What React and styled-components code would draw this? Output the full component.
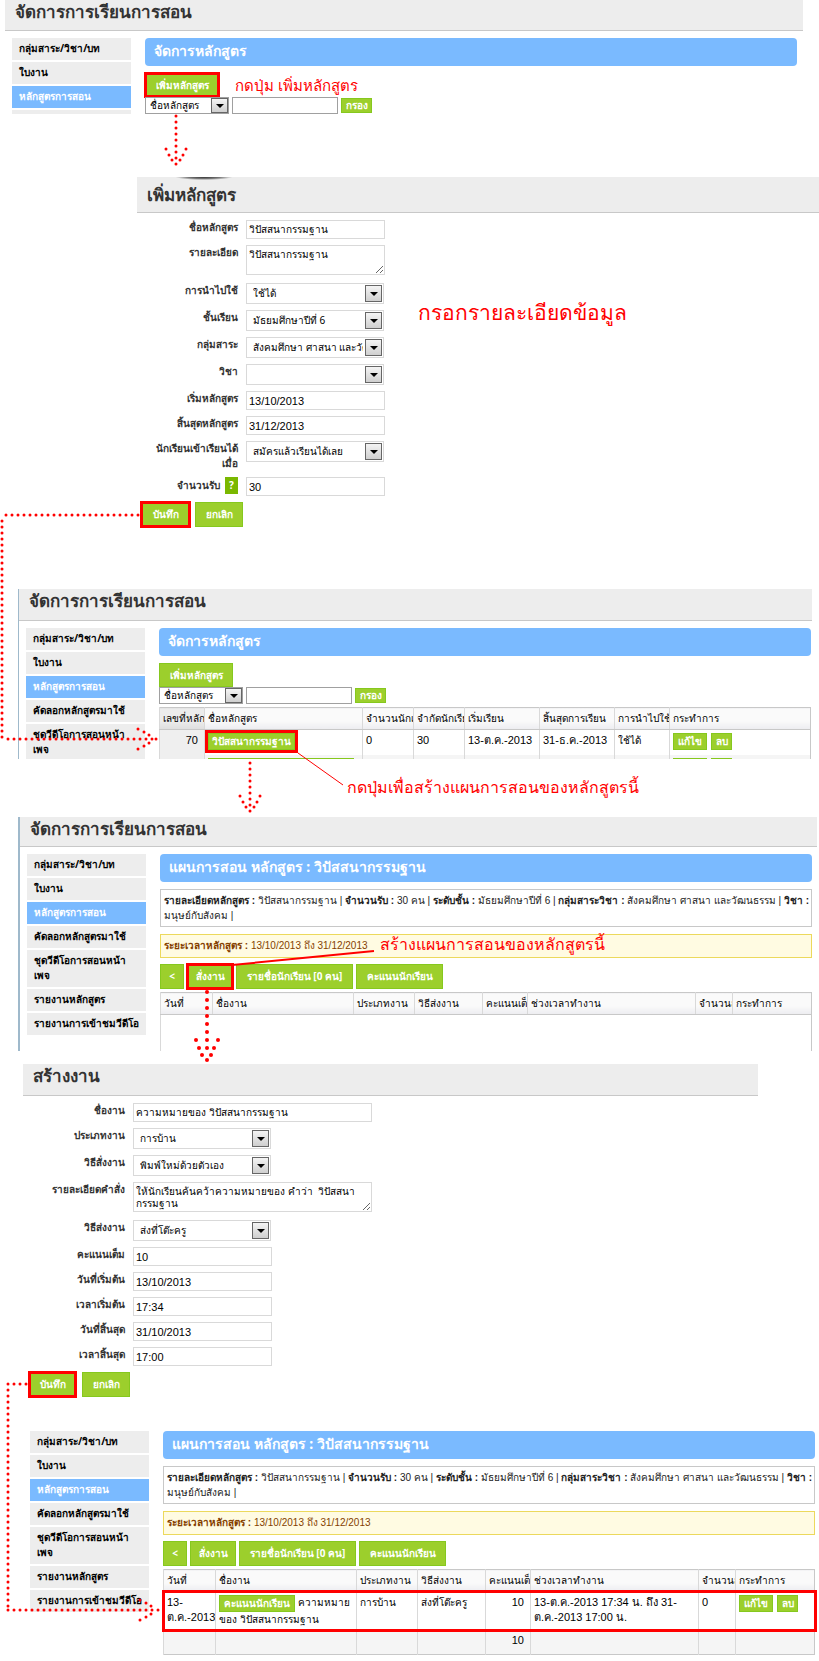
import React, { useId } from "react";
import styled, { createGlobalStyle, css } from "styled-components";

const Global = createGlobalStyle`
  * { box-sizing: border-box; }
  body { margin: 0; background: #fff; color: #000; font: 10px/15px Tahoma, "Noto Sans", "Liberation Sans", sans-serif; }
  button, input, select, textarea { font: inherit; color: inherit; margin: 0; }
`;

const Page = styled.main`
  position: relative;
  min-height: 100vh;
`;

const Panel = styled.section`
  margin: 0 ${(p) => p.$right}px ${(p) => p.$after || 0}px ${(p) => p.$left}px;
  border-left: ${(p) => p.$edge || 0}px solid #9fb9cb;
  ${(p) => p.$crop && css`height: ${p.$crop}px; overflow: hidden;`}
`;

const Heading = styled.h1`
  margin: 0;
  height: ${(p) => p.$height}px;
  padding: 0 10px;
  display: flex;
  align-items: ${(p) => p.$align || "center"};
  background: #ededed;
  border-bottom: 1px solid #c8c8c8;
  color: #333;
  font-size: 17px;
  line-height: 23px;
  font-weight: 700;
`;

const Shade = styled.span`
  position: absolute;
  top: 177px;
  left: 176px;
  width: 56px;
  height: 3px;
  background: radial-gradient(ellipse at top, #333, #777 40%, #ededed 72%);
`;

const Columns = styled.div`
  display: flex;
  gap: 14px;
  padding: 7px ${(p) => p.$right}px 0 ${(p) => p.$left}px;
`;

const Side = styled.nav`
  flex: none;
  width: 119px;
  display: flex;
  flex-direction: column;
  gap: 2px;
`;

const SideLink = styled.a`
  padding: 3px 7px 4px;
  background: ${(p) => (p.$on ? "#7abaff" : "#ededed")};
  color: ${(p) => (p.$on ? "#fff" : "#000")};
  font-weight: 700;
  text-decoration: none;
  white-space: pre;
`;

const Main = styled.div`
  flex: 1;
  min-width: 0;
`;

const Banner = styled.h2`
  margin: 0 0 7px;
  height: 28px;
  padding: 0 9px;
  border-radius: 4px;
  background: #7abaff;
  color: #fff;
  font-size: 14px;
  line-height: 26px;
  font-weight: 700;
`;

const Button = styled.button`
  height: ${(p) => p.$height || 25}px;
  padding: 0;
  border: 1px solid #86c81e;
  background: #9ccf2c;
  color: #fff;
  font-weight: 700;
  white-space: nowrap;
  vertical-align: top;
  width: ${(p) => p.$width}px;
  ${(p) => p.$marked && css`outline: 3px solid #f00; outline-offset: -2px;`}
`;

const SmallButton = styled(Button)`
  height: ${(p) => p.$height || 17}px;
  line-height: 13px;
  outline-offset: 0;
`;

const Bar = styled.div`
  display: flex;
  align-items: ${(p) => p.$align || "center"};
  gap: ${(p) => p.$gap}px;
  padding: ${(p) => p.$pad || "0"};
`;

const Note = styled.p`
  margin: 0;
  padding-top: ${(p) => p.$drop || 0}px;
  color: #f00;
  font-size: ${(p) => p.$size}px;
  line-height: 24px;
  white-space: nowrap;
`;

const OverNote = styled(Note)`
  position: absolute;
  top: 932px;
  left: 380px;
`;

const Picker = styled.span`
  display: grid;
  width: ${(p) => p.$width}px;
  height: ${(p) => p.$height}px;
  border: 1px solid ${(p) => p.$line};
  background: #fff;
  & > * { grid-area: 1 / 1; }
`;

const PickerSelect = styled.select`
  appearance: none;
  width: 100%;
  min-width: 0;
  border: 0;
  background: transparent;
  padding: 0 20px 0 ${(p) => p.$indent}px;
  text-overflow: clip;
`;

const Knob = styled.span`
  justify-self: end;
  align-self: center;
  pointer-events: none;
  display: grid;
  place-items: center;
  width: 17px;
  height: ${(p) => p.$height}px;
  margin-right: ${(p) => p.$inset}px;
  border: 1px solid #666;
  background: linear-gradient(#f4f4f4, #cfcfcf);
  &::after {
    content: "";
    border: 4px solid transparent;
    border-top-color: #000;
    border-bottom: 0;
  }
`;

const TextBox = styled.input`
  width: ${(p) => p.$width}px;
  height: ${(p) => p.$height || 19}px;
  padding: 0 2px;
  border: 1px solid ${(p) => p.$line || "#d9d9d9"};
  background: #fff;
  font-family: "Liberation Sans", sans-serif;
  font-size: ${(p) => (p.$thai ? 10 : 11)}px;
`;

const TextArea = styled.textarea`
  width: ${(p) => p.$width}px;
  height: 30px;
  margin-bottom: 2px;
  padding: 2px;
  border: 1px solid #d9d9d9;
  line-height: 12px;
  overflow: hidden;
`;

const Form = styled.form`
  display: grid;
  grid-template-columns: ${(p) => p.$label}px auto;
  column-gap: 8px;
  row-gap: 6px;
  justify-content: start;
  align-items: start;
  padding-top: 7px;
`;

const Label = styled.label`
  color: #333;
  font-weight: 700;
  text-align: right;
  white-space: pre-line;
`;

const Help = styled.button`
  width: 13px;
  height: 17px;
  margin-left: 2px;
  padding: 0;
  border: 0;
  background: #7ab800;
  color: #fff;
  font-weight: 700;
`;

const Box = styled.div`
  padding: 3px;
  margin-bottom: ${(p) => (p.$warm ? 6 : 7)}px;
  border: 1px solid ${(p) => (p.$warm ? "#ecd95c" : "#c8c8c8")};
  background: ${(p) => (p.$warm ? "#fffbe2" : "#fff")};
  color: ${(p) => (p.$warm ? "#853f00" : "#222")};
  min-height: ${(p) => (p.$warm ? 24 : 38)}px;
  font-family: "Liberation Sans", sans-serif;
  white-space: nowrap;
`;

const Table = styled.table`
  width: 100%;
  table-layout: fixed;
  border-collapse: collapse;
  border: 1px solid #c8c8c8;
  th, td {
    padding: 3px;
    border-left: 1px solid #d9d9d9;
    text-align: left;
    vertical-align: top;
    overflow: hidden;
  }
  th {
    height: 22px;
    background: linear-gradient(#fafafa 60%, #ececf0);
    border-bottom: 1px solid #c8c8c8;
    font-weight: 400;
    white-space: nowrap;
  }
  td { font-family: "Liberation Sans", sans-serif; font-size: 11px; }
  ${(p) => p.$lead && css`
    th:first-child { background: linear-gradient(#ececec 60%, #dedede); }
    td:first-child { background: #efefef; }
  `}
`;

const Col = styled.col`
  width: ${(p) => (p.$width ? p.$width + "px" : "auto")};
`;

const Row = styled.tr`
  height: ${(p) => p.$height}px;
  background: ${(p) => (p.$shade ? "#f5f5f5" : "#fff")};
  ${(p) => p.$marked && css`outline: 3px solid #f00; outline-offset: -1px;`}
  button { font: 700 10px/13px Tahoma, "Noto Sans", sans-serif; }
`;

const Num = styled.td`
  && { text-align: right; padding-right: 6px; }
`;

const DateCell = styled.td`
  && { padding-right: 0; white-space: nowrap; }
`;

const Small = styled.span`
  font-size: 10px;
`;

const Connectors = styled.svg`
  position: absolute;
  inset: 0;
  width: 100%;
  height: 100%;
  pointer-events: none;
  fill: #f00;
`;

const menu = [
  "กลุ่มสาระ/วิชา/บท",
  "ใบงาน",
  "หลักสูตรการสอน",
  "คัดลอกหลักสูตรมาใช้",
  "ชุดวีดีโอการสอนหน้า\nเพจ",
  "รายงานหลักสูตร",
  "รายงานการเข้าชมวีดีโอ",
];

function SideMenu({ count = 7 }) {
  return (
    <Side>
      {menu.slice(0, count).map((m, i) => (
        <SideLink key={m} href="#" $on={i === 2}>{m}</SideLink>
      ))}
    </Side>
  );
}

function Dropdown({ id, value, label, width = 138, height = 21, indent = 6, knob = 17, inset = 1, line = "#d9d9d9" }) {
  return (
    <Picker $width={width} $height={height} $line={line}>
      <PickerSelect id={id} aria-label={label} $indent={indent} defaultValue={value}>
        <option value={value}>{value}</option>
      </PickerSelect>
      <Knob $height={knob} $inset={inset} />
    </Picker>
  );
}

function Field({ kind = "text", label, value, width, thai, help }) {
  const id = useId();
  return (
    <>
      <Label htmlFor={id}>
        {label}
        {help && <> <Help type="button">?</Help></>}
      </Label>
      {kind === "select" && <Dropdown id={id} value={value} width={width} />}
      {kind === "area" && <TextArea id={id} defaultValue={value} $width={width || 139} />}
      {kind === "text" && <TextBox id={id} defaultValue={value} $width={width || 139} $thai={thai} />}
    </>
  );
}

function Filter() {
  return (
    <Bar $gap={3}>
      <Dropdown label="ตัวกรอง" value="ชื่อหลักสูตร" width={84} height={17} indent={4} knob={15} inset={0} line="#a0a0a0" />
      <TextBox aria-label="คำค้น" $width={106} $height={17} $line="#a0a0a0" />
      <SmallButton $height={15} $width={31}>กรอง</SmallButton>
    </Bar>
  );
}

function PlanHead({ marked }) {
  return (
    <>
      <Banner>แผนการสอน หลักสูตร : วิปัสสนากรรมฐาน</Banner>
      <Box>
        <b>รายละเอียดหลักสูตร :</b> วิปัสสนากรรมฐาน | <b>จำนวนรับ :</b> 30 คน | <b>ระดับชั้น :</b> มัธยมศึกษาปีที่ 6 |{" "}
        <b>กลุ่มสาระวิชา :</b> สังคมศึกษา ศาสนา และวัฒนธรรม | <b>วิชา :</b><br />
        มนุษย์กับสังคม |
      </Box>
      <Box $warm><b>ระยะเวลาหลักสูตร :</b> 13/10/2013 ถึง 31/12/2013</Box>
      <Bar $gap={3} $pad="0 0 3px">
        <Button $width={24}>&lt;</Button>
        <Button $width={46} $marked={marked}>สั่งงาน</Button>
        <Button $width={117}>รายชื่อนักเรียน [0 คน]</Button>
        <Button $width={87}>คะแนนนักเรียน</Button>
      </Bar>
    </>
  );
}

function PlanTable({ children }) {
  return (
    <Table>
      <colgroup>
        {[52, 141, 61, 68, 45, 168, 37, 0].map((w, i) => <Col key={i} $width={w} />)}
      </colgroup>
      <thead>
        <tr>
          {["วันที่", "ชื่องาน", "ประเภทงาน", "วิธีส่งงาน", "คะแนนเต็ม", "ช่วงเวลาทำงาน", "จำนวนส่ง", "กระทำการ"].map((h) => (
            <th key={h}>{h}</th>
          ))}
        </tr>
      </thead>
      <tbody>{children}</tbody>
    </Table>
  );
}

function RowActions({ blank }) {
  return (
    <Bar $gap={4}>
      <SmallButton $width={34} aria-label="แก้ไข">{!blank && "แก้ไข"}</SmallButton>
      <SmallButton $width={21} aria-label="ลบ">{!blank && "ลบ"}</SmallButton>
    </Bar>
  );
}

function Dots({ points, r = 1.5 }) {
  return points.map(([x, y]) => <circle key={x + "-" + y} cx={x} cy={y} r={r} />);
}

function line(x1, y1, x2, y2, step = 6) {
  const n = Math.floor(Math.hypot(x2 - x1, y2 - y1) / step);
  return Array.from({ length: n + 1 }, (_, i) => [
    x1 + Math.sign(x2 - x1) * i * step,
    y1 + Math.sign(y2 - y1) * i * step,
  ]);
}

const head = (tipX, tipY) => [[-10, -15], [-7, -9], [-4, -4], [0, 0], [10, -15], [7, -9], [4, -4]].map(([x, y]) => [tipX + x, tipY + y]);
const headRight = (tipX, tipY) => [[-18, -10], [-12, -7], [-7, -4], [0, 0], [-18, 10], [-12, 7], [-7, 4]].map(([x, y]) => [tipX + x, tipY + y]);
const bigHead = [[196, 1040], [199, 1048], [202, 1055], [207, 1060], [218, 1040], [214, 1048], [211, 1055]];

export default function App() {
  return (
    <Page>
      <Global />

      <Panel $left={5} $right={16} $crop={114} $after={63}>
        <Heading $height={31} $align="flex-start">จัดการการเรียนการสอน</Heading>
        <Columns $left={7} $right={6}>
          <SideMenu count={4} />
          <Main>
            <Banner>จัดการหลักสูตร</Banner>
            <Bar $gap={16}>
              <Button $width={74} $height={24} $marked>เพิ่มหลักสูตร</Button>
              <Note $size={15}>กดปุ่ม เพิ่มหลักสูตร</Note>
            </Bar>
            <Filter />
          </Main>
        </Columns>
      </Panel>

      <Panel $left={137} $right={0} $crop={412}>
        <Heading $height={36}>เพิ่มหลักสูตร</Heading>
        <Shade />
        <Bar $gap={33} $align="flex-start">
          <Form $label={101}>
            <Field label="ชื่อหลักสูตร" value="วิปัสสนากรรมฐาน" thai />
            <Field kind="area" label="รายละเอียด" value="วิปัสสนากรรมฐาน" />
            <Field kind="select" label="การนำไปใช้" value="ใช้ได้" />
            <Field kind="select" label="ชั้นเรียน" value="มัธยมศึกษาปีที่ 6" />
            <Field kind="select" label="กลุ่มสาระ" value="สังคมศึกษา ศาสนา และวัฒนธรรม" />
            <Field kind="select" label="วิชา" value="" />
            <Field label="เริ่มหลักสูตร" value="13/10/2013" />
            <Field label="สิ้นสุดหลักสูตร" value="31/12/2013" />
            <Field kind="select" label={"นักเรียนเข้าเรียนได้\nเมื่อ"} value="สมัครแล้วเรียนได้เลย" />
            <Field label="จำนวนรับ" value="30" help />
          </Form>
          <Note $size={21} $drop={87}>กรอกรายละเอียดข้อมูล</Note>
        </Bar>
        <Bar $gap={5} $pad="6px 0 0 4px">
          <Button $width={49} $marked>บันทึก</Button>
          <Button $width={48}>ยกเลิก</Button>
        </Bar>
      </Panel>

      <Panel $left={18} $right={7} $edge={1} $crop={170}>
        <Heading $height={32} $align="flex-start">จัดการการเรียนการสอน</Heading>
        <Columns $left={7} $right={1}>
          <SideMenu count={5} />
          <Main>
            <Banner>จัดการหลักสูตร</Banner>
            <Button $width={74} $height={24}>เพิ่มหลักสูตร</Button>
            <Filter />
            <Bar $pad="3px 0 0">
              <Table $lead>
                <colgroup>
                  {[45, 158, 51, 51, 75, 75, 55, 0].map((w, i) => <Col key={i} $width={w} />)}
                </colgroup>
                <thead>
                  <tr>
                    {["เลขที่หลักสูตร", "ชื่อหลักสูตร", "จำนวนนักเรียน", "จำกัดนักเรียน", "เริ่มเรียน", "สิ้นสุดการเรียน", "การนำไปใช้", "กระทำการ"].map((h) => (
                      <th key={h}>{h}</th>
                    ))}
                  </tr>
                </thead>
                <tbody>
                  <Row $height={25}>
                    <Num>70</Num>
                    <td><SmallButton $width={87} $marked>วิปัสสนากรรมฐาน</SmallButton></td>
                    <td>0</td>
                    <td>30</td>
                    <td>13-ต.ค.-2013</td>
                    <td>31-ธ.ค.-2013</td>
                    <td><Small>ใช้ได้</Small></td>
                    <td><RowActions /></td>
                  </Row>
                  <Row $height={25} $shade>
                    <td />
                    <td><SmallButton $width={146} aria-label="หลักสูตร" /></td>
                    <td /><td /><td /><td /><td />
                    <td><RowActions blank /></td>
                  </Row>
                </tbody>
              </Table>
            </Bar>
          </Main>
        </Columns>
      </Panel>

      <Bar $pad="16px 0 18px 347px">
        <Note $size={16}>กดปุ่มเพื่อสร้างแผนการสอนของหลักสูตรนี้</Note>
      </Bar>

      <Panel $left={18} $right={2} $edge={2} $crop={234} $after={13}>
        <Heading $height={30} $align="flex-start">จัดการการเรียนการสอน</Heading>
        <Columns $left={7} $right={5}>
          <SideMenu />
          <Main>
            <PlanHead marked />
            <PlanTable>
              <Row $height={60}><td colSpan={8} /></Row>
            </PlanTable>
          </Main>
        </Columns>
      </Panel>
      <OverNote $size={16}>สร้างแผนการสอนของหลักสูตรนี้</OverNote>

      <Panel $left={23} $right={61} $crop={360}>
        <Heading $height={32} $align="flex-start">สร้างงาน</Heading>
        <Form $label={102}>
          <Field label="ชื่องาน" value="ความหมายของ วิปัสสนากรรมฐาน" width={239} thai />
          <Field kind="select" label="ประเภทงาน" value="การบ้าน" />
          <Field kind="select" label="วิธีสั่งงาน" value="พิมพ์ใหม่ด้วยตัวเอง" />
          <Field kind="area" label="รายละเอียดคำสั่ง" value={"ให้นักเรียนค้นคว้าความหมายของ คำว่า  วิปัสสนา\nกรรมฐาน"} width={239} />
          <Field kind="select" label="วิธีส่งงาน" value="ส่งที่โต๊ะครู" />
          <Field label="คะแนนเต็ม" value="10" />
          <Field label="วันที่เริ่มต้น" value="13/10/2013" />
          <Field label="เวลาเริ่มต้น" value="17:34" />
          <Field label="วันที่สิ้นสุด" value="31/10/2013" />
          <Field label="เวลาสิ้นสุด" value="17:00" />
        </Form>
        <Bar $gap={6} $pad="6px 0 0 6px">
          <Button $width={47} $marked>บันทึก</Button>
          <Button $width={48}>ยกเลิก</Button>
        </Bar>
      </Panel>

      <Panel $left={23} $right={0}>
        <Columns $left={7} $right={4}>
          <SideMenu />
          <Main>
            <PlanHead />
            <PlanTable>
              <Row $height={38} $marked>
                <DateCell>13-<br />ต.ค.-2013</DateCell>
                <td><SmallButton $width={76}>คะแนนนักเรียน</SmallButton> <Small>ความหมายของ วิปัสสนากรรมฐาน</Small></td>
                <td><Small>การบ้าน</Small></td>
                <td><Small>ส่งที่โต๊ะครู</Small></td>
                <Num>10</Num>
                <td>13-ต.ค.-2013 17:34 น. ถึง 31-<br />ต.ค.-2013 17:00 น.</td>
                <td>0</td>
                <td><RowActions /></td>
              </Row>
              <Row $height={24} $shade>
                <td /><td /><td /><td />
                <Num>10</Num>
                <td /><td /><td />
              </Row>
            </PlanTable>
          </Main>
        </Columns>
      </Panel>

      <Connectors aria-hidden="true">
        <Dots points={[...line(176, 116, 176, 160), ...head(176, 164)]} />
        <Dots points={[...line(138, 515, 2, 515), ...line(2, 521, 2, 739), ...line(8, 739, 152, 739), ...headRight(156, 739)]} />
        <Dots points={[...line(250, 763, 250, 807), ...head(250, 811)]} />
        <Dots points={[...line(207, 992, 207, 1055, 8), ...bigHead]} r={2} />
        <Dots points={[...line(26, 1384, 8, 1384), ...line(8, 1390, 8, 1606), ...line(8, 1610, 152, 1610), ...headRight(158, 1610)]} />
        <path d="M298 753 343 785" stroke="#f00" />
        <path d="M232 965 374 951" stroke="#f00" strokeWidth="2" />
      </Connectors>
    </Page>
  );
}
